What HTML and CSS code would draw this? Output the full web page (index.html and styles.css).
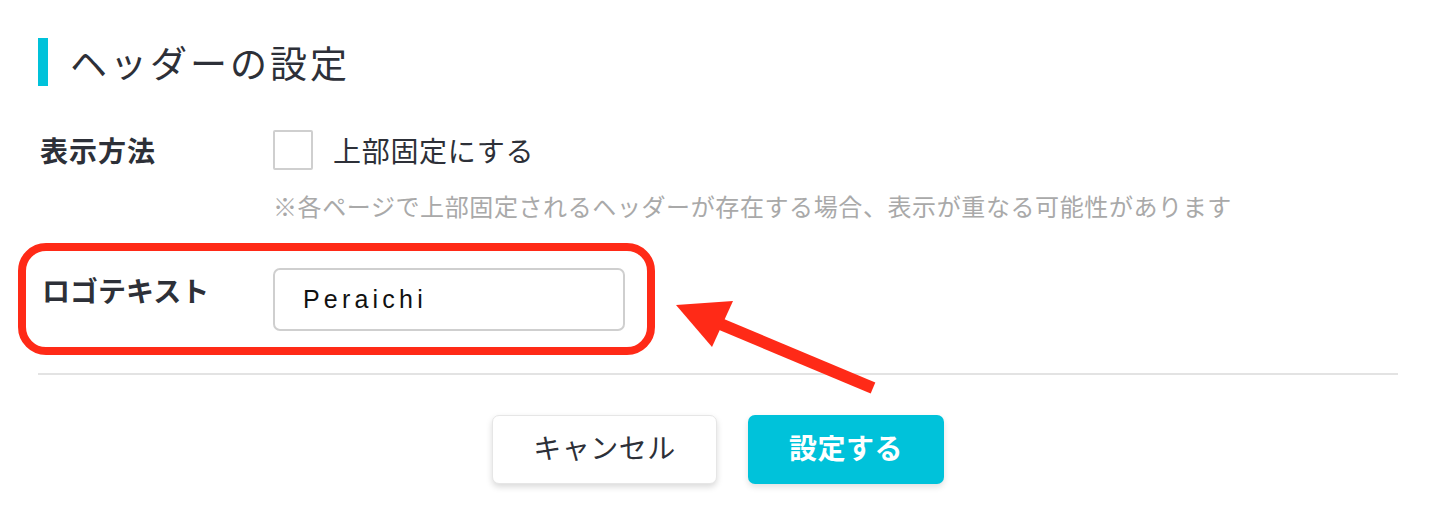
FILE: index.html
```html
<!DOCTYPE html>
<html lang="ja">
<head>
  <meta charset="UTF-8" />
  <meta name="viewport" content="width=device-width, initial-scale=1" />
  <title>ヘッダーの設定</title>
  <link rel="stylesheet" href="styles.css">
</head>
<body>
  <div class="panel">
    <h2 class="panel-title">ヘッダーの設定</h2>

    <div class="field">
      <div class="field-label label-spaced">表示方法</div>
      <div class="field-body">
        <label class="check">
          <span class="check-box"></span>
          <span class="check-text">上部固定にする</span>
        </label>
        <p class="hint">※各ページで上部固定されるヘッダーが存在する場合、表示が重なる可能性があります</p>
      </div>
    </div>

    <!-- highlighted row -->
    <div class="field field-marked">
      <div class="field-label">ロゴテキスト</div>
      <div class="field-body">
        <input type="text" class="text-input" value="Peraichi" />
      </div>
    </div>

    <div class="actions">
      <button class="btn btn-cancel">キャンセル</button>
      <button class="btn btn-submit">設定する</button>
    </div>
  </div>

  <svg class="arrow" width="1436" height="523" viewBox="0 0 1436 523">
    <line x1="873" y1="388" x2="718" y2="323" stroke="#ff2a17" stroke-width="12" />
    <polygon points="676,305 733,301 712,347" fill="#ff2a17" />
  </svg>
</body>
</html>
```

FILE: styles.css
```css
:root {
  --accent: #00c2da;
  --text: #2d3038;
  --muted: #a9a9a9;
  --mark: #ff2a17;
}

* {
  box-sizing: border-box;
}

body {
  margin: 0;
  background: #fff;
  color: var(--text);
  font-family: "Noto Sans CJK JP", "Noto Sans", sans-serif;
  position: relative;
  width: 1436px;
  height: 523px;
  overflow: hidden;
}

.panel {
  padding: 38px 38px 0 38px;
}

.panel-title {
  margin: 0;
  height: 48px;
  display: flex;
  align-items: center;
  border-left: 10px solid var(--accent);
  padding-left: 22px;
  font-size: 37px;
  font-weight: 400;
  letter-spacing: 3px;
}

.field {
  display: flex;
  align-items: flex-start;
  margin-top: 44px;
}

.field-label {
  width: 235px;
  padding-left: 2px;
  font-size: 28px;
  font-weight: 700;
  line-height: 40px;
}

.label-spaced {
  letter-spacing: 1px;
}

.field-body {
  flex: 1;
}

.check {
  display: flex;
  align-items: center;
  gap: 20px;
}

.check-box {
  width: 40px;
  height: 40px;
  border: 2px solid #cfcfcf;
  border-radius: 2px;
}

.check-text {
  font-size: 28px;
  letter-spacing: 0.7px;
}

.hint {
  margin: 20px 0 0 0;
  color: var(--muted);
  font-size: 24px;
  letter-spacing: 0.6px;
  line-height: 32px;
}

.field-marked {
  margin: 21px 0 0 -20px;
  width: 637px;
  border: 8px solid var(--mark);
  border-radius: 28px;
  padding: 17px 0 16px 14px;
}

.field-marked .field-label {
  width: 233px;
  line-height: 44px;
}

.text-input {
  width: 352px;
  height: 63px;
  border: 2px solid #cfcfcf;
  border-radius: 7px;
  padding: 0 28px;
  font-family: "Liberation Sans", Arial, sans-serif;
  font-size: 25px;
  letter-spacing: 4.2px;
  color: #111;
}

.actions {
  margin-top: 18px;
  border-top: 2px solid #e3e3e3;
  padding-top: 40px;
  display: flex;
  justify-content: center;
  gap: 31px;
}

.btn {
  height: 69px;
  padding: 0 0 5px 0;
  border-radius: 7px;
  font-family: "Noto Sans CJK JP", "Noto Sans", sans-serif;
  font-size: 28px;
  letter-spacing: 0.5px;
  cursor: pointer;
}

.btn-cancel {
  width: 225px;
  background: #fff;
  border: 1px solid #e6e6e6;
  color: var(--text);
  box-shadow: 0 3px 6px rgba(0, 0, 0, 0.15);
}

.btn-submit {
  width: 196px;
  background: var(--accent);
  border: none;
  color: #fff;
  font-weight: 700;
  box-shadow: 0 3px 6px rgba(0, 0, 0, 0.12);
}

.arrow {
  position: absolute;
  top: 0;
  left: 0;
  pointer-events: none;
}
```
